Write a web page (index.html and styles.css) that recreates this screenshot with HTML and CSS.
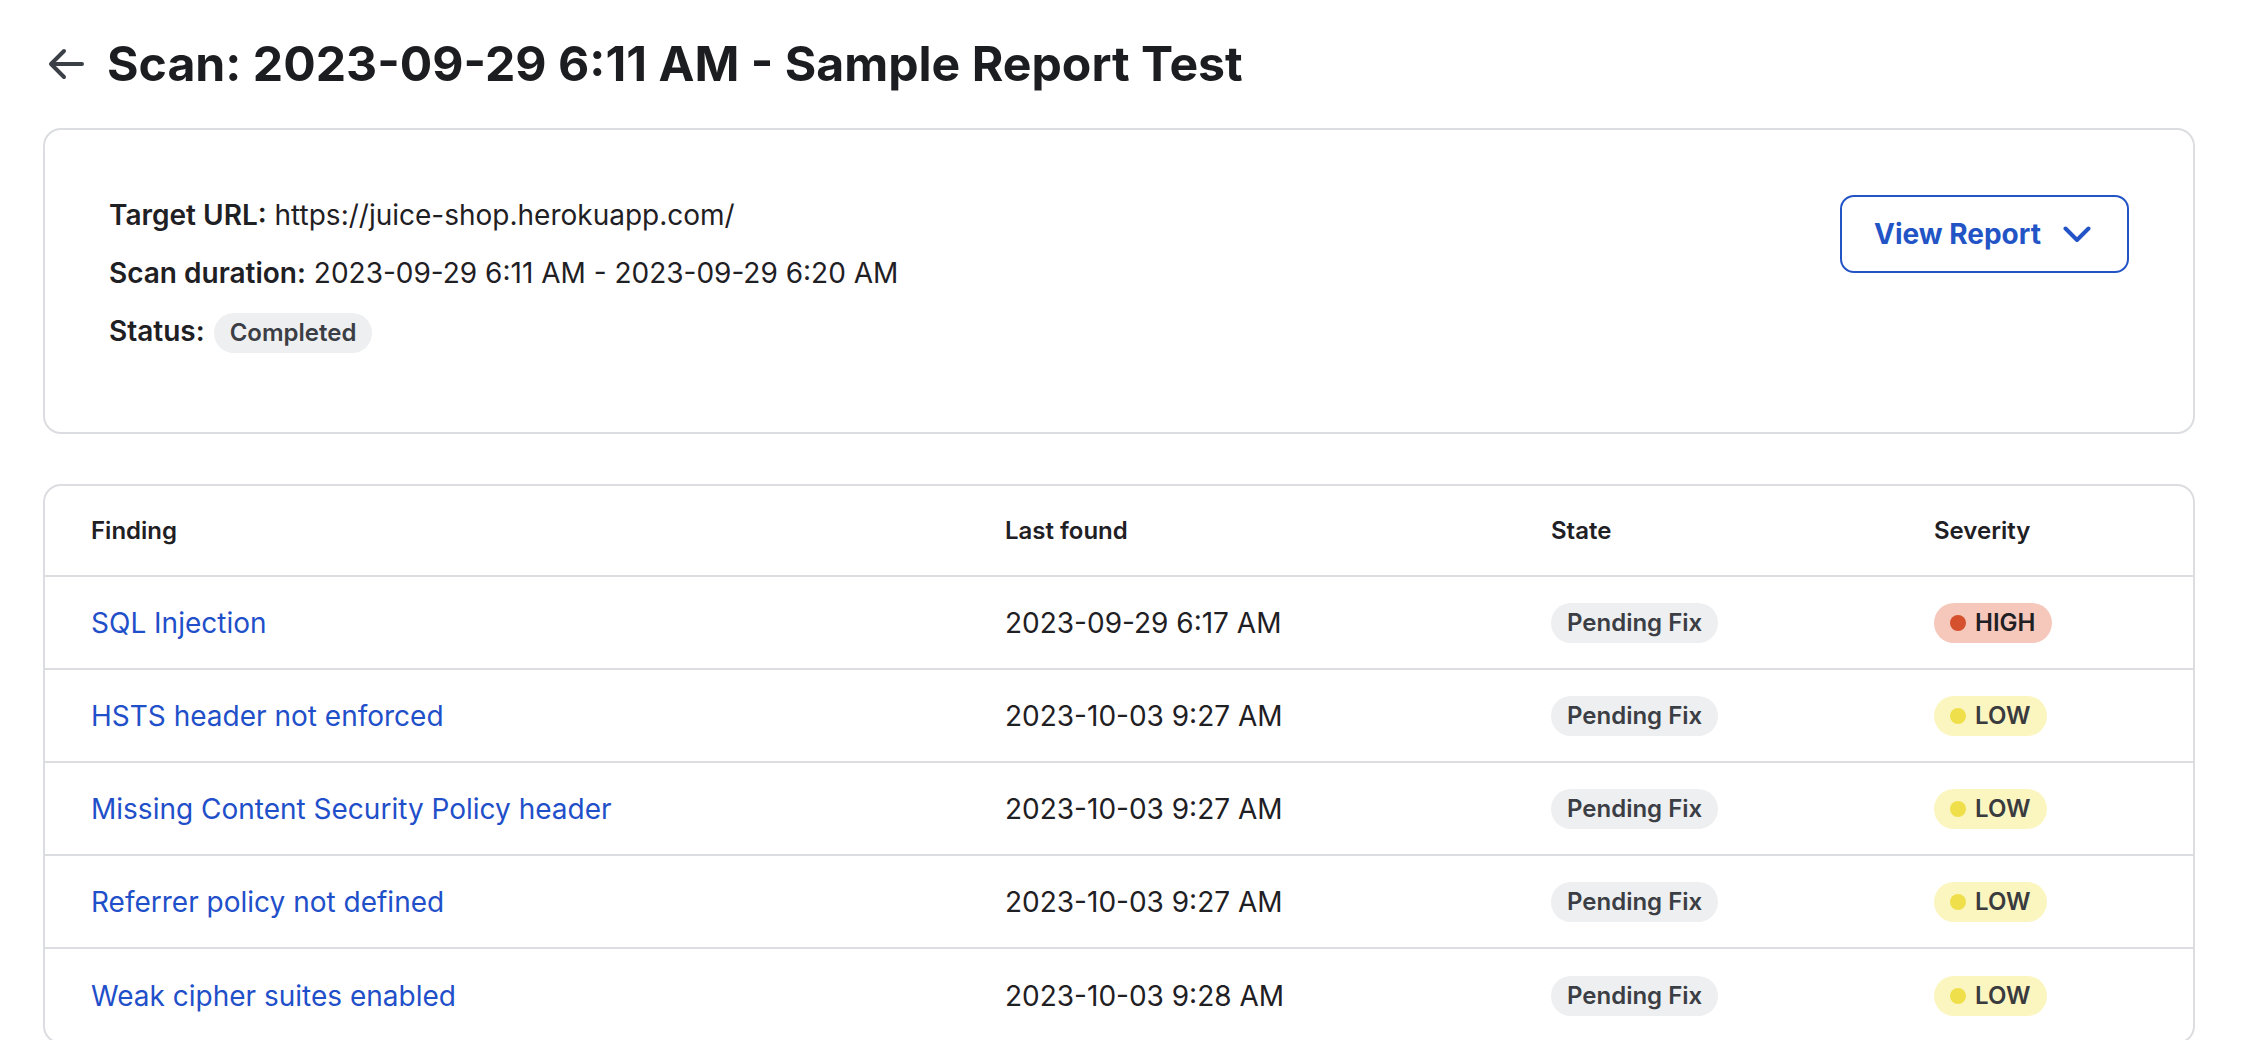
FILE: index.html
```html
<!DOCTYPE html>
<html lang="en">
<head>
<meta charset="utf-8">
<title>Scan report</title>
<link rel="stylesheet" href="styles.css">
</head>
<body>
<div class="page">
  <header class="page-header">
    <a class="back" href="#" aria-label="Back">
      <svg width="36" height="32" viewBox="0 0 36 32" fill="none" stroke="currentColor" stroke-width="4" stroke-linecap="round" stroke-linejoin="round"><path d="M3 16H34M16 3L3 16L16 29"/></svg>
    </a>
    <h1 class="title">Scan: 2023-09-29 6:11 AM - Sample Report Test</h1>
  </header>

  <section class="card summary">
    <div class="info">
      <div class="info-row"><span class="label">Target URL:</span> https://juice-shop.herokuapp.com/</div>
      <div class="info-row"><span class="label">Scan duration:</span> 2023-09-29 6:11 AM - 2023-09-29 6:20 AM</div>
      <div class="info-row status-row"><span class="label">Status:</span><span class="pill pill-gray status-pill">Completed</span></div>
    </div>
    <button class="view-btn" type="button">
      <span>View Report</span>
      <svg width="28" height="17" viewBox="0 0 28 17" fill="none" stroke="currentColor" stroke-width="4" stroke-linecap="round" stroke-linejoin="round"><path d="M2.5 2.5L14 14L25.5 2.5"/></svg>
    </button>
  </section>

  <section class="card table">
    <div class="row head">
      <div class="cell">Finding</div>
      <div class="cell">Last found</div>
      <div class="cell">State</div>
      <div class="cell">Severity</div>
    </div>
    <div class="row">
      <div class="cell"><a class="link" href="#">SQL Injection</a></div>
      <div class="cell">2023-09-29 6:17 AM</div>
      <div class="cell"><span class="pill pill-gray">Pending Fix</span></div>
      <div class="cell"><span class="pill sev high"><i class="dot"></i>HIGH</span></div>
    </div>
    <div class="row">
      <div class="cell"><a class="link" href="#">HSTS header not enforced</a></div>
      <div class="cell">2023-10-03 9:27 AM</div>
      <div class="cell"><span class="pill pill-gray">Pending Fix</span></div>
      <div class="cell"><span class="pill sev low"><i class="dot"></i>LOW</span></div>
    </div>
    <div class="row">
      <div class="cell"><a class="link" href="#">Missing Content Security Policy header</a></div>
      <div class="cell">2023-10-03 9:27 AM</div>
      <div class="cell"><span class="pill pill-gray">Pending Fix</span></div>
      <div class="cell"><span class="pill sev low"><i class="dot"></i>LOW</span></div>
    </div>
    <div class="row">
      <div class="cell"><a class="link" href="#">Referrer policy not defined</a></div>
      <div class="cell">2023-10-03 9:27 AM</div>
      <div class="cell"><span class="pill pill-gray">Pending Fix</span></div>
      <div class="cell"><span class="pill sev low"><i class="dot"></i>LOW</span></div>
    </div>
    <div class="row">
      <div class="cell"><a class="link" href="#">Weak cipher suites enabled</a></div>
      <div class="cell">2023-10-03 9:28 AM</div>
      <div class="cell"><span class="pill pill-gray">Pending Fix</span></div>
      <div class="cell"><span class="pill sev low"><i class="dot"></i>LOW</span></div>
    </div>
  </section>
</div>
</body>
</html>
```

FILE: styles.css
```css
* { box-sizing: border-box; }

html, body {
  margin: 0;
  background: #ffffff;
}

body {
  font-family: Inter, "Noto Sans", "Liberation Sans", sans-serif;
  color: #1f2024;
}

.page {
  padding: 35px 49px 0 43px;
}

.page-header {
  display: flex;
  align-items: center;
  height: 58px;
}

.back {
  display: flex;
  color: #3b3f46;
  margin-left: 5px;
  margin-right: 23px;
}

.title {
  margin: 0;
  font-size: 48.2px;
  line-height: 58px;
  font-weight: 700;
  color: #1c1d21;
}

.card {
  border: 2px solid #dcdde1;
  border-radius: 18px;
  background: #fff;
}

.summary {
  margin-top: 35px;
  display: flex;
  justify-content: space-between;
  align-items: flex-start;
  padding: 65px 64px 81px 64px;
}

.info {
  display: flex;
  flex-direction: column;
  gap: 18px;
  font-size: 28px;
  line-height: 40px;
}

.info-row {
  height: 40px;
}

.label {
  font-weight: 600;
}

.status-row {
  display: flex;
  align-items: center;
}

.status-row .label {
  margin-right: 9px;
}

.status-pill {
  margin-top: 3px;
}

.pill {
  display: inline-flex;
  align-items: center;
  height: 40px;
  padding: 0 16px;
  border-radius: 20px;
  font-size: 24px;
  font-weight: 600;
  line-height: 1;
}

.pill-gray {
  background: #eeeff1;
  color: #3b3e44;
}

.view-btn {
  display: flex;
  align-items: center;
  gap: 22px;
  height: 78px;
  padding: 0 36px 0 32px;
  border: 2px solid #2354c6;
  border-radius: 14px;
  background: #fff;
  color: #2354c6;
  font-family: inherit;
  font-size: 28px;
  font-weight: 700;
}

.table {
  margin-top: 50px;
  overflow: hidden;
}

.row {
  display: grid;
  grid-template-columns: 914px 546px 383px 1fr;
  align-items: center;
  min-height: 93px;
  border-bottom: 2px solid #dcdde1;
  font-size: 28px;
}

.row:last-child {
  border-bottom: none;
}

.row.head {
  min-height: 91px;
  font-size: 24px;
  font-weight: 600;
  color: #1f2024;
}

.cell {
  padding-left: 46px;
}

.link {
  color: #1f4fc9;
  text-decoration: none;
}

.sev {
  padding: 0 17px 0 16px;
  color: #1f2024;
}

.sev .dot {
  width: 16px;
  height: 16px;
  border-radius: 50%;
  margin-right: 9px;
}

.high { background: #f6c8bc; }
.high .dot { background: #d5502d; }

.low { background: #fbf5c0; color: #3a3b3e; }
.low .dot { background: #efdf4a; }
```
